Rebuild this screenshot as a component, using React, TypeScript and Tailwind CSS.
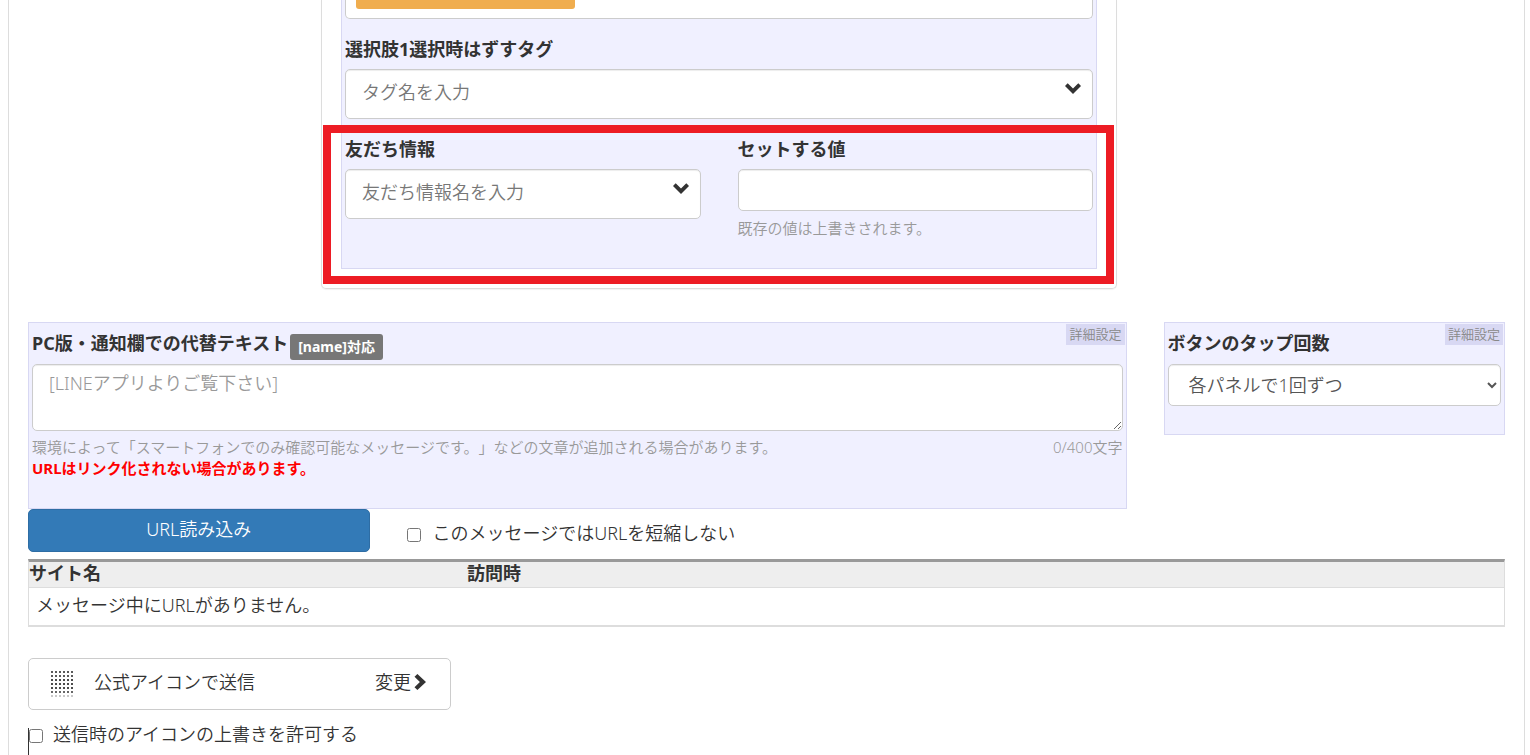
import type { ReactNode } from "react";

interface PanelProps {
  className?: string;
  advanced?: boolean;
  children: ReactNode;
}

interface ComboFieldProps {
  id: string;
  label: string;
  placeholder: string;
}

const labelClass = "text-[18px] leading-[25px] font-bold";
const controlClass =
  "block w-full rounded-[5px] border border-[#ccc] bg-white px-4 text-[18px] leading-[25px] shadow-[inset_0_1px_1px_rgba(0,0,0,0.075)]";
const helpClass = "text-[15px] leading-[21px] text-[#999]";

const dotColumns = [0, 4, 8, 12, 16, 20];
const dotRows = [
  { y: 0, color: "#333" },
  { y: 4, color: "#333" },
  { y: 8, color: "#222" },
  { y: 12, color: "#222" },
  { y: 16, color: "#222" },
  { y: 20, color: "#444" },
  { y: 24, color: "#bbb" },
];

function ChevronDown() {
  return (
    <svg
      className="pointer-events-none absolute top-3.5 right-3 h-[11px] w-4"
      viewBox="0 0 16 11"
      fill="#333"
      aria-hidden="true"
    >
      <path d="M0 3 2.7 0.3 8 5.4 13.3 0.3 16 3 8 11z" />
    </svg>
  );
}

function ChevronRight() {
  return (
    <svg className="h-4 w-3" viewBox="0 0 12 16" fill="#333" aria-hidden="true">
      <path d="M0.5 2.8 3.4 0 12 8 3.4 16 0.5 13.2 5.9 8z" />
    </svg>
  );
}

function DotIcon() {
  return (
    <svg className="h-[26px] w-[22px]" viewBox="0 0 22 26" aria-hidden="true">
      {dotRows.map((row) =>
        dotColumns.map((x) => (
          <rect key={`${x}-${row.y}`} x={x + 0.1} y={row.y + 0.1} width="1.8" height="1.8" fill={row.color} />
        ))
      )}
    </svg>
  );
}

function Panel({ className = "", advanced = false, children }: PanelProps) {
  return (
    <div className={`relative border border-[#d8d8f3] bg-[#f0f0ff] px-[3px] ${className}`}>
      {advanced && (
        <span className="absolute top-px right-px bg-[#d8d8f3] px-[3px] text-[13px] leading-[21px] text-[#888]">
          詳細設定
        </span>
      )}
      {children}
    </div>
  );
}

function ComboField({ id, label, placeholder }: ComboFieldProps) {
  return (
    <div className="mt-[18px]">
      <label htmlFor={id} className={`mb-[7px] block ${labelClass}`}>
        {label}
      </label>
      <div className="relative">
        <input
          id={id}
          type="text"
          placeholder={placeholder}
          className={`h-[50px] pr-10 pb-1 placeholder:text-[#777] ${controlClass}`}
        />
        <ChevronDown />
      </div>
    </div>
  );
}

function ChoiceCard() {
  return (
    <section className="relative ml-[293px] w-[53.9%] rounded-b-[5px] border border-t-0 border-[#ddd] px-[19px] pb-[19px] shadow-[0_1px_1px_rgba(0,0,0,0.05)]">
      <Panel className="border-t-0 pb-[29px]">
        <div className="h-[19px] rounded-b-[5px] border border-t-0 border-[#ccc] bg-white px-2.5">
          <div className="h-[9px] w-[219px] rounded-b-[3px] bg-[#f0ad4e]" />
        </div>
        <ComboField id="remove-tag" label="選択肢1選択時はずすタグ" placeholder="タグ名を入力" />
        <div className="grid grid-cols-2 gap-x-[37px]">
          <ComboField id="friend-info" label="友だち情報" placeholder="友だち情報名を入力" />
          <div className="mt-[18px]">
            <label htmlFor="set-value" className={`mb-[7px] block ${labelClass}`}>
              セットする値
            </label>
            <input id="set-value" type="text" className={`h-[42px] ${controlClass}`} />
            <p className={`mt-[7px] ${helpClass}`}>既存の値は上書きされます。</p>
          </div>
        </div>
      </Panel>
      <div className="pointer-events-none absolute top-[125px] right-0.5 bottom-1 left-px border-8 border-[#ed1c24]" />
    </section>
  );
}

function MessageOptions() {
  return (
    <section className="mt-[33px] grid grid-cols-4 items-start gap-x-[37px]">
      <Panel advanced className="col-span-3 pt-2 pb-[29px]">
        <div className="flex items-start pb-1">
          <label htmlFor="alt-text" className={labelClass}>
            PC版・通知欄での代替テキスト
          </label>
          <span className="mt-[3px] ml-0.5 rounded-[3px] bg-[#777] px-2 text-[14px] leading-[26px] font-bold text-white">
            [name]対応
          </span>
        </div>
        <textarea
          id="alt-text"
          placeholder="[LINEアプリよりご覧下さい]"
          className={`h-[67px] resize-y py-1.5 placeholder:text-[#999] ${controlClass}`}
        />
        <div className={`mt-1.5 flex justify-between ${helpClass}`}>
          <p>
            環境によって「スマートフォンでのみ確認可能なメッセージです。」などの文章が追加される場合があります。
          </p>
          <p>0/400文字</p>
        </div>
        <p className="text-[15px] leading-[21px] font-bold text-[#f00]">URLはリンク化されない場合があります。</p>
      </Panel>
      <Panel advanced className="pt-2 pb-7">
        <label htmlFor="tap-count" className={`mb-2 block ${labelClass}`}>
          ボタンのタップ回数
        </label>
        <select id="tap-count" className={`h-[42px] text-[#555] ${controlClass}`}>
          <option>各パネルで1回ずつ</option>
        </select>
      </Panel>
    </section>
  );
}

function UrlSettings() {
  return (
    <section>
      <div className="grid grid-cols-4 gap-x-[37px] pb-[7px]">
        <button
          type="button"
          className="h-[43px] rounded-[5px] border border-[#2e6da4] bg-[#337ab7] pb-0.5 text-[18px] leading-[25px] text-white"
        >
          URL読み込み
        </button>
        <label className="col-span-3 flex items-center pt-1.5 text-[18px] leading-[25px]">
          <input type="checkbox" className="mt-0.5 mr-3 size-[14px]" />
          このメッセージではURLを短縮しない
        </label>
      </div>
      <table className="w-full table-fixed border-separate border-spacing-0 border-x border-t-[3px] border-b-2 border-x-[#ddd] border-t-[#999] border-b-[#ddd] text-left text-[18px] leading-[25px]">
        <thead className="leading-[23px]">
          <tr className="bg-[#eee]">
            <th className="w-[29.7%] border-b border-[#ddd] p-0 pb-0.5 font-bold">サイト名</th>
            <th className="border-b border-[#ddd] p-0 pb-0.5 font-bold">訪問時</th>
          </tr>
        </thead>
        <tbody>
          <tr>
            <td colSpan={2} className="px-[7px] pt-[5px] pb-[7px]">
              メッセージ中にURLがありません。
            </td>
          </tr>
        </tbody>
      </table>
    </section>
  );
}

function SenderSettings() {
  return (
    <section className="mt-[31px]">
      <button
        type="button"
        className="flex h-[52px] w-[423px] items-center rounded-[5px] border border-[#ccc] bg-white pr-6 pl-[22px] text-[18px] leading-[25px]"
      >
        <DotIcon />
        <span className="ml-[21px] pb-1">公式アイコンで送信</span>
        <span className="ml-auto flex items-center gap-[3px] pb-1">
          変更
          <ChevronRight />
        </span>
      </button>
      <div className="relative pt-3 pb-2">
        <div className="absolute top-[18px] bottom-0 left-0 w-px bg-[#333]" />
        <label className="relative flex items-center text-[18px] leading-[25px]">
          <input type="checkbox" className="mt-0.5 mr-2.5 ml-px size-[14px]" />
          送信時のアイコンの上書きを許可する
        </label>
      </div>
    </section>
  );
}

export default function App() {
  return (
    <div className="min-h-screen bg-white pr-[5px] pl-2 font-['Noto_Sans','Noto_Sans_CJK_JP',sans-serif] font-[350] text-[#333] [text-spacing-trim:space-all]">
      <main className="min-h-screen border-x border-[#ddd] px-[19px]">
        <ChoiceCard />
        <MessageOptions />
        <UrlSettings />
        <SenderSettings />
      </main>
    </div>
  );
}
